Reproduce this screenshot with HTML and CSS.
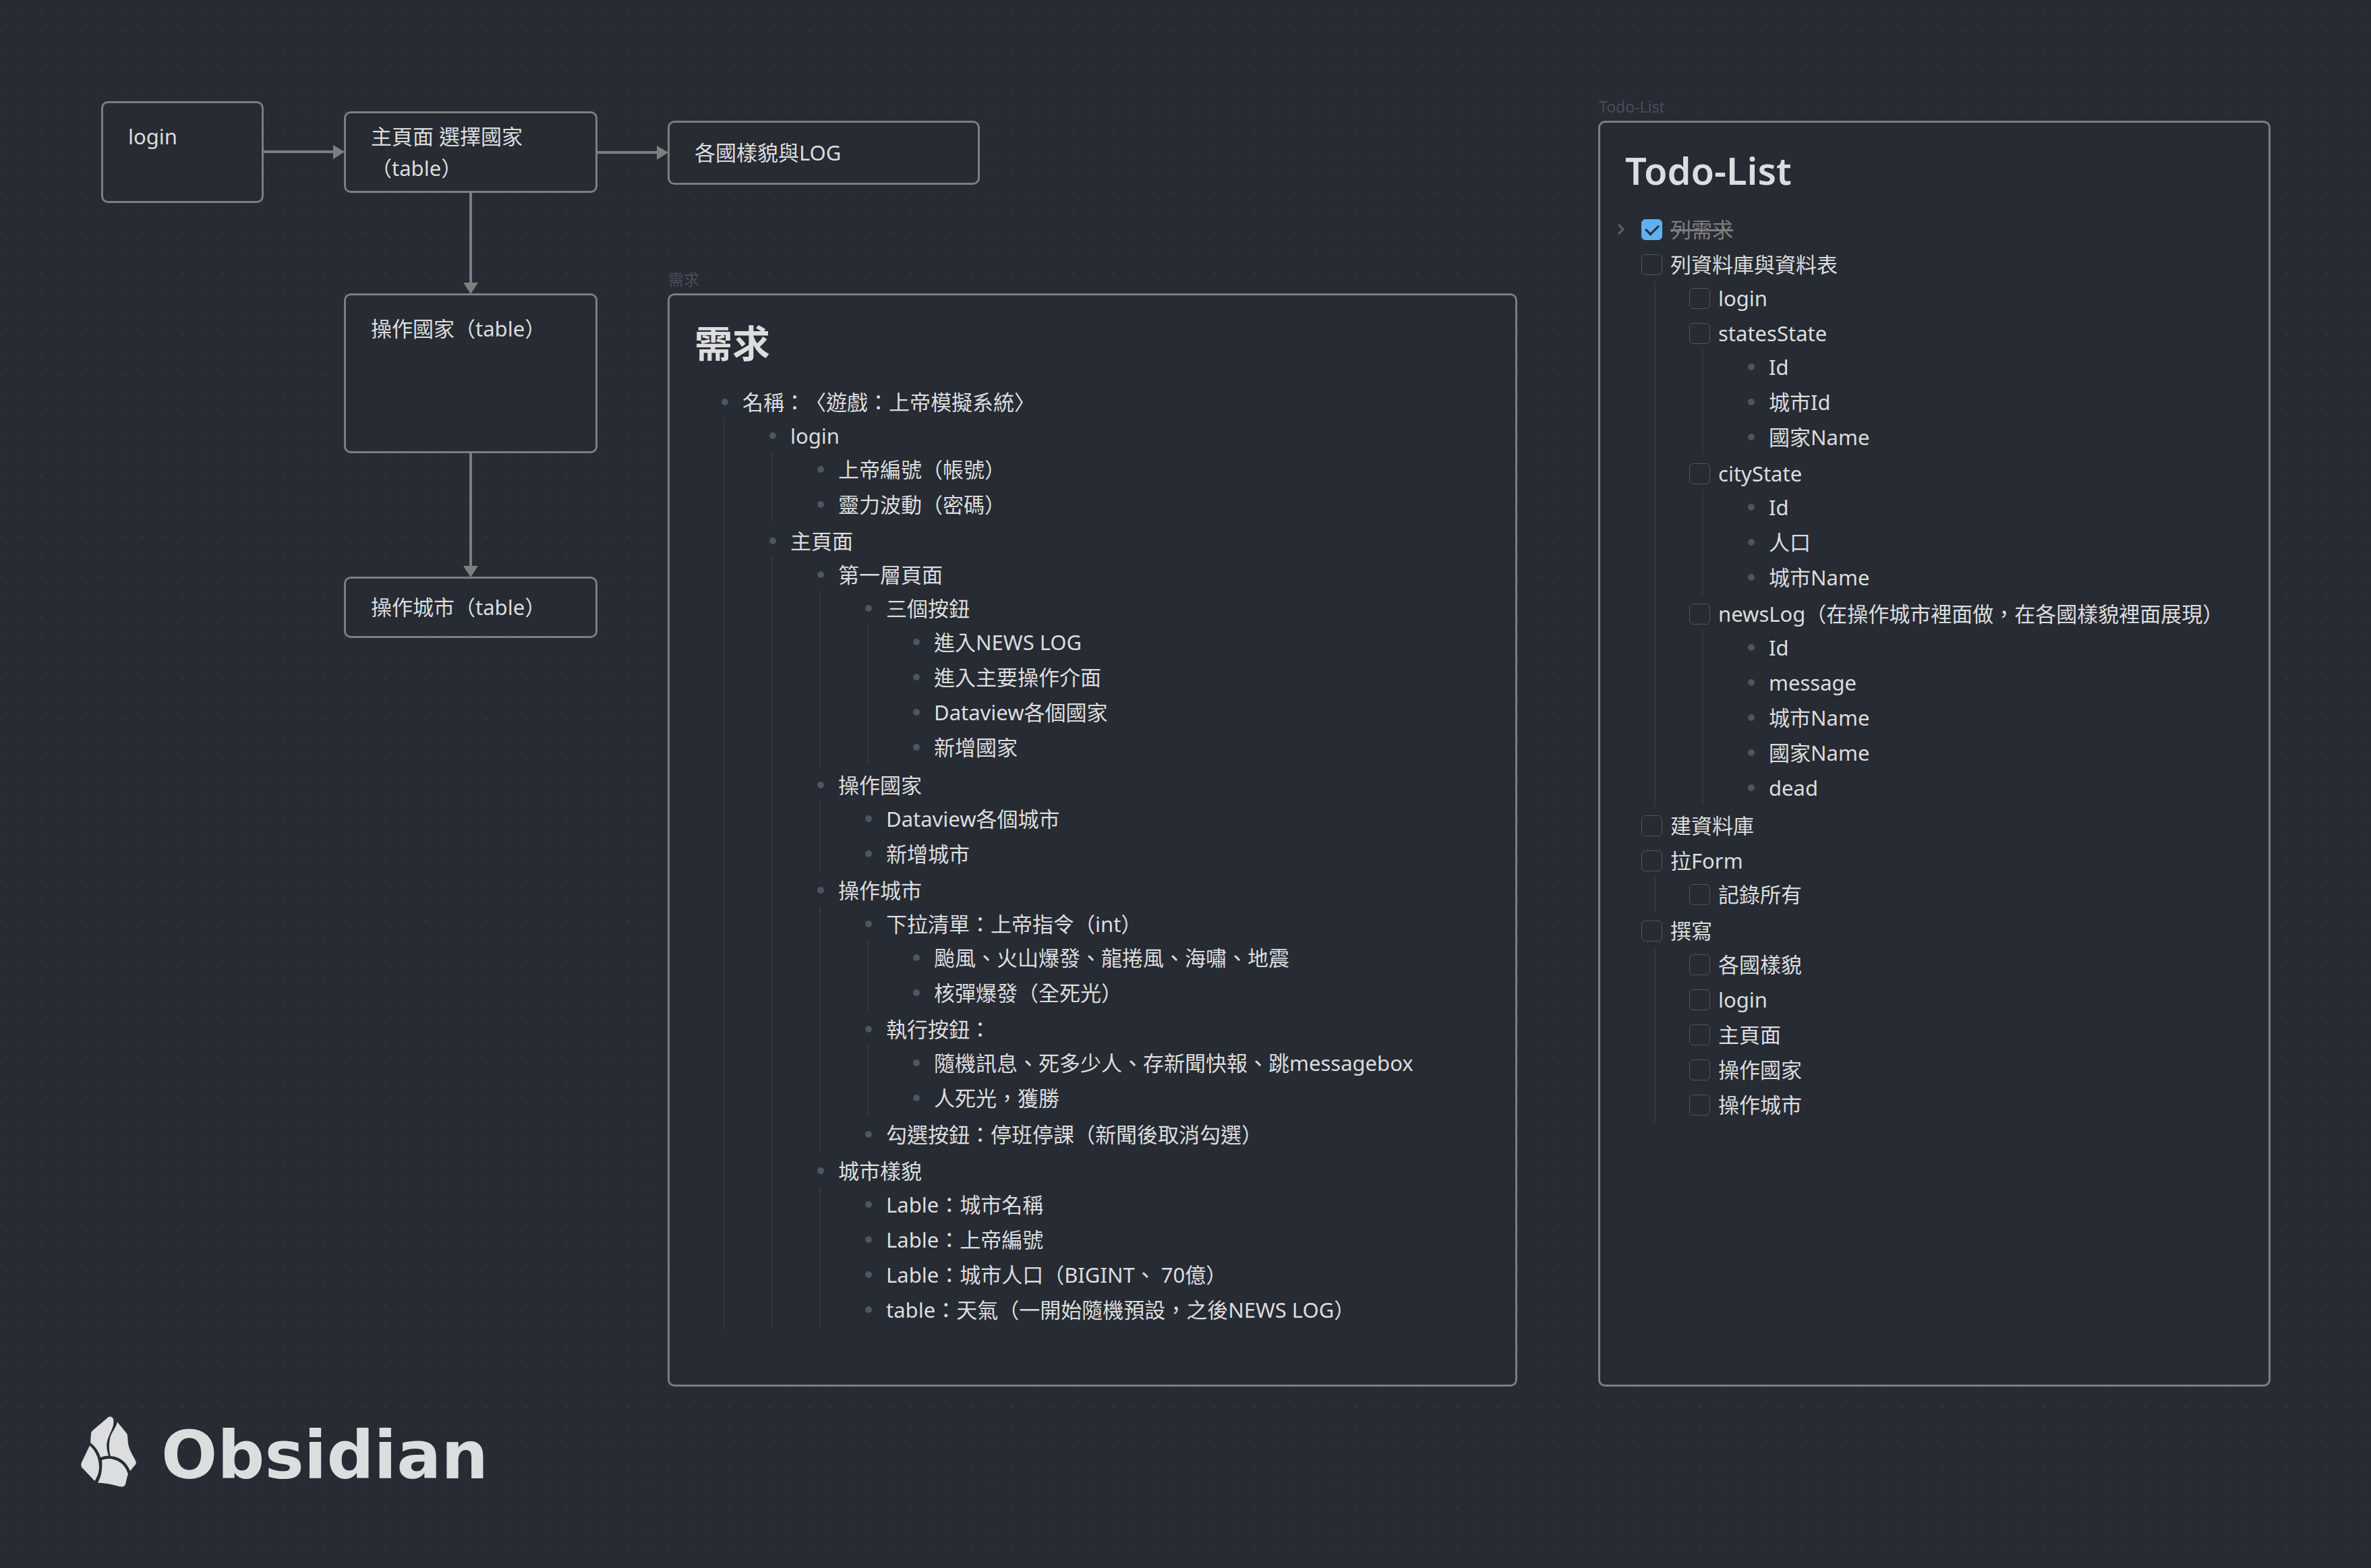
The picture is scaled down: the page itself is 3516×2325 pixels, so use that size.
FILE: index.html
```
<!DOCTYPE html>
<html lang="zh-Hant">
<head>
<meta charset="utf-8">
<meta name="viewport" content="width=device-width, initial-scale=1">
<title>Canvas</title>
<link rel="stylesheet" href="styles.css">
</head>
<body>
<main class="canvas">
  <svg class="edges" aria-hidden="true">
    <g class="edge-line">
      <path d="M391 225H495"/>
      <path d="M886 226H976"/>
      <path d="M698 286V421"/>
      <path d="M698 672V841"/>
    </g>
    <g class="edge-head">
      <path d="M494 215L511 225L494 236Z"/>
      <path d="M974 216L991 226L974 237Z"/>
      <path d="M687 419L709 419L698 436Z"/>
      <path d="M687 839L709 839L698 856Z"/>
    </g>
  </svg>

  <section class="node node-login"><p>login</p></section>
  <section class="node node-main centered"><p>主頁面 選擇國家<br>（table）</p></section>
  <section class="node node-log centered"><p>各國樣貌與LOG</p></section>
  <section class="node node-country"><p>操作國家（table）</p></section>
  <section class="node node-city centered"><p>操作城市（table）</p></section>

  <article class="node note note-needs">
    <div class="node-label">需求</div>
    <h1>需求</h1>
    <ul>
      <li>名稱：〈遊戲：上帝模擬系統〉
        <ul>
          <li>login
            <ul>
              <li>上帝編號（帳號）</li>
              <li>靈力波動（密碼）</li>
            </ul>
          </li>
          <li>主頁面
            <ul>
              <li>第一層頁面
                <ul>
                  <li>三個按鈕
                    <ul>
                      <li>進入NEWS LOG</li>
                      <li>進入主要操作介面</li>
                      <li>Dataview各個國家</li>
                      <li>新增國家</li>
                    </ul>
                  </li>
                </ul>
              </li>
              <li>操作國家
                <ul>
                  <li>Dataview各個城市</li>
                  <li>新增城市</li>
                </ul>
              </li>
              <li>操作城市
                <ul>
                  <li>下拉清單：上帝指令（int）
                    <ul>
                      <li>颱風、火山爆發、龍捲風、海嘯、地震</li>
                      <li>核彈爆發（全死光）</li>
                    </ul>
                  </li>
                  <li>執行按鈕：
                    <ul>
                      <li>隨機訊息、死多少人、存新聞快報、跳messagebox</li>
                      <li>人死光，獲勝</li>
                    </ul>
                  </li>
                  <li>勾選按鈕：停班停課（新聞後取消勾選）</li>
                </ul>
              </li>
              <li>城市樣貌
                <ul>
                  <li>Lable：城市名稱</li>
                  <li>Lable：上帝編號</li>
                  <li>Lable：城市人口（BIGINT、 70億）</li>
                  <li>table：天氣（一開始隨機預設，之後NEWS LOG）</li>
                </ul>
              </li>
            </ul>
          </li>
        </ul>
      </li>
    </ul>
  </article>

  <article class="node note note-todo">
    <div class="node-label">Todo-List</div>
    <h1>Todo-List</h1>
    <ul>
      <li class="task done">
        <svg class="fold" viewBox="0 0 10 16" aria-hidden="true"><path d="M2 2L8 8L2 14"/></svg>
        <label><input type="checkbox" checked><span>列需求</span></label>
      </li>
      <li class="task"><label><input type="checkbox"><span>列資料庫與資料表</span></label>
        <ul>
          <li class="task"><label><input type="checkbox"><span>login</span></label></li>
          <li class="task"><label><input type="checkbox"><span>statesState</span></label>
            <ul>
              <li>Id</li>
              <li>城市Id</li>
              <li>國家Name</li>
            </ul>
          </li>
          <li class="task"><label><input type="checkbox"><span>cityState</span></label>
            <ul>
              <li>Id</li>
              <li>人口</li>
              <li>城市Name</li>
            </ul>
          </li>
          <li class="task"><label><input type="checkbox"><span>newsLog（在操作城市裡面做，在各國樣貌裡面展現）</span></label>
            <ul>
              <li>Id</li>
              <li>message</li>
              <li>城市Name</li>
              <li>國家Name</li>
              <li>dead</li>
            </ul>
          </li>
        </ul>
      </li>
      <li class="task"><label><input type="checkbox"><span>建資料庫</span></label></li>
      <li class="task"><label><input type="checkbox"><span>拉Form</span></label>
        <ul>
          <li class="task"><label><input type="checkbox"><span>記錄所有</span></label></li>
        </ul>
      </li>
      <li class="task"><label><input type="checkbox"><span>撰寫</span></label>
        <ul>
          <li class="task"><label><input type="checkbox"><span>各國樣貌</span></label></li>
          <li class="task"><label><input type="checkbox"><span>login</span></label></li>
          <li class="task"><label><input type="checkbox"><span>主頁面</span></label></li>
          <li class="task"><label><input type="checkbox"><span>操作國家</span></label></li>
          <li class="task"><label><input type="checkbox"><span>操作城市</span></label></li>
        </ul>
      </li>
    </ul>
  </article>

  <footer class="brand">
    <svg class="brand-mark" viewBox="0 0 82 105" aria-hidden="true">
      <path d="M41 1C46 -1 49 3 48.500 9C48 19 41 27 38.500 39C37.500 46 39 52 41 58.500C37 58.500 33 59.500 29 61C26 51 21 45 14 39L15 26C15 24 16 22.500 17.500 21Z"/>
      <path d="M54 8.500L68 25.500C70 29 69 35 70.500 43C73 53 78 59 81 66C82 68 82 70 81 71.500L73 81C68 69 59 60 44 59C41 50 41.500 39 43.500 31C46 23 52 17 54 8.500Z"/>
      <path d="M13 43.500C22 51 27 63 27 76C27 83 24 90 20.500 96L1.500 76C0 74 0 71 1 68.500Z"/>
      <path d="M31 65C37 63 44 62 51 65C61 68 67 76 70 86C68 90 67.500 96 66 101C65 104 62 105 57 104C46 101 36 99 25 98.500C31 88 32 77 31 65Z"/>
    </svg>
    <span class="brand-name">Obsidian</span>
  </footer>
</main>
</body>
</html>
```
FILE: styles.css
```
:root {
  --bg: #272b33;
  --line: #7e7e7e;
  --text: #dcddde;
  --faint: #4f5561;
  --guide: #33373f;
  --accent: #61afef;
}

* {
  box-sizing: border-box;
}

body {
  margin: 0;
  background: var(--bg);
  color: var(--text);
  font: 31px/47px "Noto Sans", "Noto Sans CJK TC", sans-serif;
  text-spacing-trim: space-all;
}

.canvas {
  position: relative;
  min-height: 100vh;
  background-image: radial-gradient(circle, #32363d 1px, transparent 2px);
  background-size: 30px 30px;
  background-position: -14px 1px;
}

.edges {
  position: absolute;
  inset: 0;
  width: 100%;
  height: 100%;
}

.edge-line {
  fill: none;
  stroke: var(--line);
  stroke-width: 4;
}

.edge-head {
  fill: var(--line);
}

/* Cards on the canvas */
.node {
  position: absolute;
  padding: 26px 37px;
  background: var(--bg);
  border: 3px solid var(--line);
  border-radius: 10px;
}

.node p {
  margin: 0;
}

.centered {
  display: flex;
  align-items: center;
  padding-block: 0;
}

.node-login {
  left: 150px;
  top: 150px;
  width: 241px;
  min-height: 151px;
}

.node-main {
  left: 510px;
  top: 165px;
  width: 376px;
  min-height: 121px;
}

.node-log {
  left: 990px;
  top: 179px;
  width: 463px;
  min-height: 95px;
}

.node-country {
  left: 510px;
  top: 435px;
  width: 376px;
  min-height: 237px;
}

.node-city {
  left: 510px;
  top: 855px;
  width: 376px;
  min-height: 91px;
}

.note-needs {
  left: 990px;
  top: 435px;
  width: 1260px;
  min-height: 1621px;
}

.note-todo {
  left: 2370px;
  top: 179px;
  width: 997px;
  min-height: 1877px;
}

.node-label {
  position: absolute;
  left: -2px;
  bottom: 100%;
  padding-bottom: 9px;
  color: #474d59;
  font-size: 23px;
  line-height: 30px;
}

.note h1 {
  margin: 6px 0 24px;
  font-size: 56px;
  font-weight: 600;
  line-height: 76px;
}

/* Outline lists */
.note ul {
  margin: 0;
  padding: 0 0 0 71px;
  list-style: none;
}

.note li {
  position: relative;
  padding: 3px 0 2px;
}

.note li::before {
  content: "";
  position: absolute;
  left: -31px;
  top: 21px;
  width: 10px;
  height: 10px;
  border-radius: 50%;
  background: var(--faint);
}

.note li.task::before {
  content: none;
}

.note li ul {
  margin-left: -28px;
  padding-left: 97px;
  border-left: 2px solid var(--guide);
}

/* Tasks */
.task label {
  display: flex;
  align-items: center;
  gap: 12px;
  margin-left: -47px;
}

.task input {
  display: grid;
  place-items: center;
  flex: none;
  appearance: none;
  width: 31px;
  height: 31px;
  margin: 0;
  border: 1px solid var(--faint);
  border-radius: 6px;
}

.task input:checked {
  border-color: var(--accent);
  background: var(--accent);
}

.task input:checked::before {
  content: "";
  width: 9px;
  height: 16px;
  margin-bottom: 5px;
  border: solid var(--bg);
  border-width: 0 3px 3px 0;
  rotate: 45deg;
}

.done span {
  color: var(--line);
  text-decoration: line-through 3px;
}

.fold {
  position: absolute;
  left: -82px;
  top: 18px;
  width: 10px;
  height: 16px;
  fill: none;
  stroke: #5c626d;
  stroke-width: 3;
  stroke-linecap: round;
  stroke-linejoin: round;
}

/* Brand */
.brand {
  position: absolute;
  left: 120px;
  top: 2100px;
  display: flex;
  align-items: flex-start;
  gap: 37px;
}

.brand-mark {
  width: 82px;
  height: 105px;
  fill: var(--text);
}

.brand-name {
  font: bold 98px/116px "DejaVu Sans", sans-serif;
}
```
